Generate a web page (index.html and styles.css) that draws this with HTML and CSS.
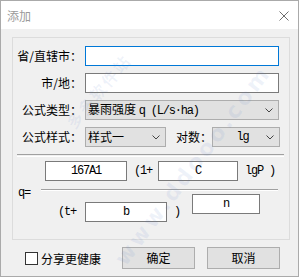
FILE: index.html
```html
<!DOCTYPE html>
<html lang="zh-CN">
<head>
<meta charset="utf-8">
<title>添加</title>
<link rel="stylesheet" href="styles.css">
</head>
<body>
<div class="window">
  <div class="titlebar">
    <span class="title">添加</span>
    <svg class="close" viewBox="0 0 10 10" width="10" height="10"><path d="M0.5 0.5 L9.5 9.5 M9.5 0.5 L0.5 9.5" stroke="#6e6e6e" stroke-width="1" fill="none"/></svg>
  </div>
  <div class="client">
    <div class="group">
      <div class="row">
        <span class="lbl">省/直辖市：</span>
        <div class="textbox focused"></div>
      </div>
      <div class="row">
        <span class="lbl">市/地：</span>
        <div class="textbox"></div>
      </div>
      <div class="row">
        <span class="lbl">公式类型：</span>
        <div class="combo wide">
          <span class="ctext">暴雨强度 <span class="mono">q (L/s·ha)</span></span>
          <svg class="arrow" viewBox="0 0 8 5" width="8" height="5"><polyline points="0.5,0.5 4,4 7.5,0.5" fill="none" stroke="#444" stroke-width="1"/></svg>
        </div>
      </div>
      <div class="row">
        <span class="lbl">公式样式：</span>
        <div class="combo style">
          <span class="ctext">样式一</span>
          <svg class="arrow" viewBox="0 0 8 5" width="8" height="5"><polyline points="0.5,0.5 4,4 7.5,0.5" fill="none" stroke="#444" stroke-width="1"/></svg>
        </div>
        <span class="lbl2">对数：</span>
        <div class="combo log">
          <span class="ctext center mono">lg</span>
          <svg class="arrow" viewBox="0 0 8 5" width="8" height="5"><polyline points="0.5,0.5 4,4 7.5,0.5" fill="none" stroke="#444" stroke-width="1"/></svg>
        </div>
      </div>
      <div class="sep"></div>
      <div class="formula">
        <span class="q mono">q=</span>
        <div class="frac">
          <div class="num">
            <div class="fbox a mono">167A1</div>
            <span class="op op1 mono">(1+</span>
            <div class="fbox c mono">C</div>
            <span class="op op2 mono">lgP )</span>
          </div>
          <div class="bar"></div>
          <div class="den">
            <span class="op op3 mono">(t+</span>
            <div class="fbox b mono">b</div>
            <span class="op op4 mono">)</span>
            <div class="fbox n mono">n</div>
          </div>
        </div>
      </div>
    </div>
    <div class="footer">
      <span class="check"></span>
      <span class="checklbl">分享更健康</span>
      <button class="btn ok">确定</button>
      <button class="btn cancel">取消</button>
    </div>
  </div>
  <span class="wm wm1">多多软件站</span>
  <span class="wm wm2">www.ddooo.com</span>
</div>
</body>
</html>
```

FILE: styles.css
```css
body {
  margin: 0;
  background: #fff;
  font-family: "Noto Sans CJK SC", sans-serif;
  font-size: 12px;
  color: #000;
}

.mono {
  font-family: "Liberation Mono", "Noto Sans CJK SC", monospace;
  font-size: 12px;
  letter-spacing: -1.2px;
}

.window {
  position: relative;
  width: 299px;
  height: 277px;
  box-sizing: border-box;
  border: 1px solid #aaa;
  display: flex;
  flex-direction: column;
  overflow: hidden;
}

.titlebar {
  height: 28px;
  flex: none;
  background: #fff;
  display: flex;
  align-items: center;
  padding: 0 9px 0 6px;
}

.title {
  flex: 1;
  color: #9a9a9a;
  line-height: 1;
  padding-top: 1px;
}

.close {
  display: block;
  margin-top: 2px;
}

.client {
  flex: 1;
  background: #f0f0f0;
}

.group {
  margin: 8px 0 0 11px;
  width: 278px;
  height: 203px;
  box-sizing: border-box;
  border: 1px solid #dcdcdc;
  padding-top: 8px;
}

.row {
  display: flex;
  align-items: center;
  height: 20px;
  line-height: 20px;
  margin-bottom: 7px;
}

.lbl {
  width: 69px;
  margin-right: 3px;
  text-align: right;
  white-space: nowrap;
}

.textbox {
  width: 194px;
  height: 20px;
  box-sizing: border-box;
  border: 1px solid #7a7a7a;
  background: #fff;
}

.textbox.focused {
  border-color: #0078d7;
}

.combo {
  height: 20px;
  box-sizing: border-box;
  border: 1px solid #adadad;
  background: #e1e1e1;
  display: flex;
  align-items: center;
  padding: 0 5px 0 2px;
}

.combo.wide { width: 194px; }
.combo.style { width: 81px; }
.combo.log { width: 68px; }

.ctext {
  flex: 1;
  white-space: nowrap;
  line-height: 18px;
}

.ctext.center {
  text-align: center;
  padding-left: 4px;
}

.arrow {
  display: block;
  flex: none;
}

.lbl2 {
  margin-left: 10px;
  width: 36px;
  white-space: nowrap;
}

.sep {
  margin: 4px 0 0 4px;
  width: 267px;
  height: 1px;
  border-top: 1px solid #a0a0a0;
  border-bottom: 1px solid #fff;
}

.formula {
  display: flex;
  align-items: center;
  margin-top: 4px;
}

.q {
  width: 28px;
  padding-left: 5px;
  box-sizing: border-box;
  padding-top: 2px;
}

.frac {
  width: 237px;
}

.num {
  display: flex;
  align-items: center;
  height: 20px;
}

.fbox {
  height: 20px;
  box-sizing: border-box;
  border: 1px solid #7a7a7a;
  background: #fff;
  text-align: center;
  line-height: 18px;
}

.fbox.a { width: 82px; margin-left: 4px; }
.fbox.c { width: 80px; margin-left: 6px; }
.fbox.b { width: 82px; margin-left: 9px; margin-top: 8px; }
.fbox.n { width: 68px; margin-left: 12px; }

.op { white-space: nowrap; line-height: 20px; }
.op1 { margin-left: 7px; }
.op2 { margin-left: 7px; }
.op3 { margin-left: 17px; margin-top: 8px; }
.op4 { margin-left: 7px; margin-top: 8px; }

.bar {
  margin-top: 8px;
  height: 0;
  border-top: 1px solid #a0a0a0;
  border-bottom: 1px solid #fff;
}

.den {
  display: flex;
  align-items: flex-start;
  margin-top: 3px;
}

.footer {
  display: flex;
  align-items: center;
  height: 22px;
  margin-top: 7px;
  padding: 0 18px 0 24px;
}

.check {
  width: 13px;
  height: 13px;
  box-sizing: border-box;
  border: 1px solid #333;
  background: #fff;
}

.checklbl {
  margin-left: 3px;
}

.btn {
  width: 73px;
  height: 22px;
  box-sizing: border-box;
  border: 1px solid #adadad;
  background: #e1e1e1;
  font-family: "Noto Sans CJK SC", sans-serif;
  font-size: 12px;
  color: #000;
  padding: 0;
  line-height: 20px;
}

.btn.ok { margin-left: auto; }
.btn.cancel { margin-left: 12px; }

.wm {
  position: absolute;
  font-family: "DejaVu Sans", "Noto Sans CJK SC", sans-serif;
  font-weight: bold;
  color: rgba(80, 120, 200, 0.09);
  white-space: nowrap;
  pointer-events: none;
}

.wm1 {
  left: 52px;
  top: 78px;
  font-size: 16px;
  letter-spacing: 2px;
  transform: rotate(-50deg);
}

.wm2 {
  left: 70px;
  top: 152px;
  font-size: 22px;
  letter-spacing: 3px;
  transform: rotate(-53deg);
}
```
